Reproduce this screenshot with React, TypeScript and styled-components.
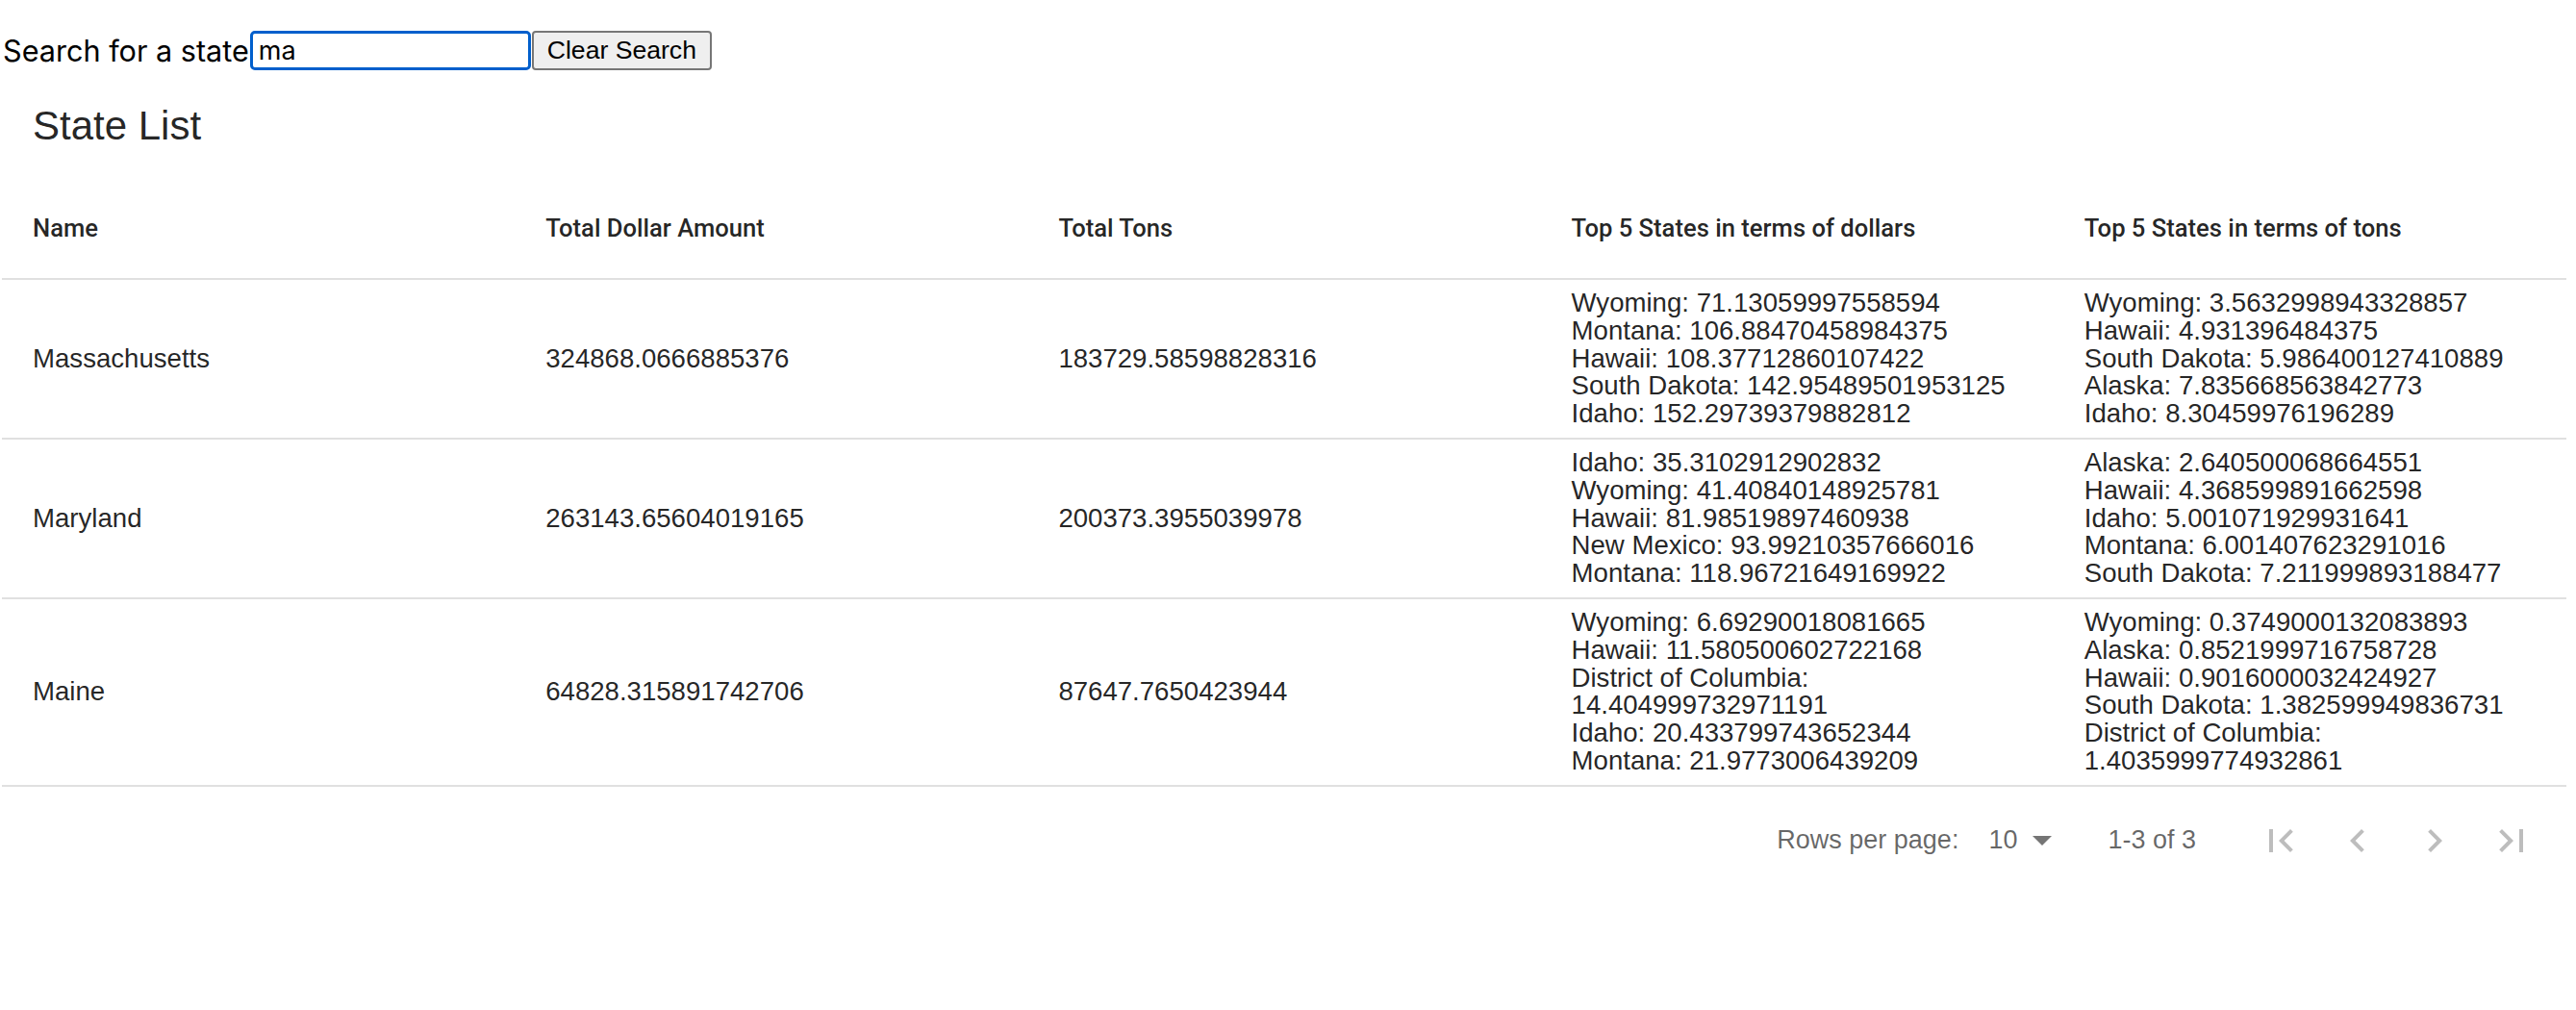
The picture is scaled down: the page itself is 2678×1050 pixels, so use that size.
import React from "react";
import styled, { createGlobalStyle } from "styled-components";

const GlobalStyle = createGlobalStyle`
  html, body { margin: 0; padding: 0; background: #ffffff; }
  body { font-family: Inter, "Liberation Sans", sans-serif; color: #000; }
`;

const Page = styled.div`
  width: 2678px;
  display: flex;
  flex-direction: column;
`;

const SearchRow = styled.div`
  display: flex;
  align-items: center;
  height: 41px;
  margin-top: 32px;
`;

const SearchLabel = styled.label`
  font-family: Inter, "Liberation Sans", sans-serif;
  font-size: 30.6px;
  color: #000;
  padding-left: 3px;
  white-space: nowrap;
`;

const SearchInput = styled.input`
  box-sizing: border-box;
  width: 292px;
  height: 41px;
  margin: 0 0 0 1px;
  padding: 0 6px;
  border: 3px solid #005fcc;
  border-radius: 5px;
  outline: none;
  font-family: Inter, "Liberation Sans", sans-serif;
  font-size: 27px;
  color: #000;
  caret-color: #000;
`;

const ClearButton = styled.button`
  box-sizing: border-box;
  height: 41px;
  width: 187px;
  margin-left: 1px;
  padding: 0;
  background: #efefef;
  border: 2px solid #767676;
  border-radius: 4px;
  font-family: "Liberation Sans", Arial, sans-serif;
  font-size: 26.6px;
  color: #000;
`;

const TableWrap = styled.div`
  margin-left: 2px;
  width: 2666px;
  display: flex;
  flex-direction: column;
  font-family: "Liberation Sans", Arial, sans-serif;
  color: rgba(0, 0, 0, 0.87);
`;

const Toolbar = styled.div`
  height: 116px;
  display: flex;
  align-items: center;
  padding-left: 32px;
`;

const Title = styled.h2`
  margin: 0;
  font-family: "Liberation Sans", Arial, sans-serif;
  font-size: 42px;
  font-weight: 400;
  color: rgba(0, 0, 0, 0.87);
`;

const Table = styled.table`
  width: 100%;
  table-layout: fixed;
  border-collapse: collapse;
`;

const HeadCell = styled.th`
  text-align: left;
  padding: 24px 32px 28px 32px;
  line-height: 48px;
  font-family: Roboto, "Liberation Sans", sans-serif;
  font-size: 25.6px;
  font-weight: 500;
  color: rgba(0, 0, 0, 0.87);
  border-bottom: 2px solid #e0e0e0;
  vertical-align: middle;
`;

const Cell = styled.td`
  padding: 10px 32px;
  font-size: 27.6px;
  line-height: 28.8px;
  color: rgba(0, 0, 0, 0.87);
  border-bottom: 2px solid #e0e0e0;
  vertical-align: middle;
`;

const Entry = styled.div`
  display: block;
`;

const Pagination = styled.div`
  height: 108px;
  padding-top: 2px;
  display: flex;
  align-items: center;
  justify-content: flex-end;
  padding-right: 17px;
  font-family: "Liberation Sans", Arial, sans-serif;
  font-size: 27px;
  color: rgba(0, 0, 0, 0.6);
`;

const RowsLabel = styled.span`
  white-space: nowrap;
`;

const RowsSelect = styled.div`
  display: flex;
  align-items: center;
  margin-left: 31px;
  color: rgba(0, 0, 0, 0.6);
`;

const DropArrow = styled.svg`
  width: 20px;
  height: 10px;
  margin-left: 16px;
  fill: rgba(0, 0, 0, 0.54);
`;

const Range = styled.span`
  margin-left: 58px;
  margin-right: 48px;
  white-space: nowrap;
`;

const Actions = styled.div`
  display: flex;
  align-items: center;
`;

const IconButton = styled.button`
  width: 80px;
  height: 80px;
  padding: 0;
  border: none;
  background: transparent;
  display: flex;
  align-items: center;
  justify-content: center;
  svg {
    width: 48px;
    height: 48px;
    fill: rgba(0, 0, 0, 0.26);
  }
`;

type Row = {
  name: string;
  dollars: string;
  tons: string;
  topDollars: string[];
  topTons: string[];
};

const rows: Row[] = [
  {
    name: "Massachusetts",
    dollars: "324868.0666885376",
    tons: "183729.58598828316",
    topDollars: [
      "Wyoming: 71.13059997558594",
      "Montana: 106.88470458984375",
      "Hawaii: 108.37712860107422",
      "South Dakota: 142.95489501953125",
      "Idaho: 152.29739379882812",
    ],
    topTons: [
      "Wyoming: 3.5632998943328857",
      "Hawaii: 4.931396484375",
      "South Dakota: 5.986400127410889",
      "Alaska: 7.835668563842773",
      "Idaho: 8.30459976196289",
    ],
  },
  {
    name: "Maryland",
    dollars: "263143.65604019165",
    tons: "200373.3955039978",
    topDollars: [
      "Idaho: 35.3102912902832",
      "Wyoming: 41.40840148925781",
      "Hawaii: 81.98519897460938",
      "New Mexico: 93.99210357666016",
      "Montana: 118.96721649169922",
    ],
    topTons: [
      "Alaska: 2.640500068664551",
      "Hawaii: 4.368599891662598",
      "Idaho: 5.001071929931641",
      "Montana: 6.001407623291016",
      "South Dakota: 7.211999893188477",
    ],
  },
  {
    name: "Maine",
    dollars: "64828.315891742706",
    tons: "87647.7650423944",
    topDollars: [
      "Wyoming: 6.69290018081665",
      "Hawaii: 11.580500602722168",
      "District of Columbia: 14.404999732971191",
      "Idaho: 20.433799743652344",
      "Montana: 21.9773006439209",
    ],
    topTons: [
      "Wyoming: 0.3749000132083893",
      "Alaska: 0.8521999716758728",
      "Hawaii: 0.9016000032424927",
      "South Dakota: 1.382599949836731",
      "District of Columbia: 1.4035999774932861",
    ],
  },
];

const headers = [
  "Name",
  "Total Dollar Amount",
  "Total Tons",
  "Top 5 States in terms of dollars",
  "Top 5 States in terms of tons",
];

export default function App() {
  return (
    <Page>
      <GlobalStyle />
      <SearchRow>
        <SearchLabel htmlFor="search">Search for a state</SearchLabel>
        <SearchInput id="search" value="ma" readOnly autoFocus />
        <ClearButton type="button">Clear Search</ClearButton>
      </SearchRow>
      <TableWrap>
        <Toolbar>
          <Title>State List</Title>
        </Toolbar>
        <Table>
          <thead>
            <tr>
              {headers.map((h) => (
                <HeadCell key={h}>{h}</HeadCell>
              ))}
            </tr>
          </thead>
          <tbody>
            {rows.map((r) => (
              <tr key={r.name}>
                <Cell>{r.name}</Cell>
                <Cell>{r.dollars}</Cell>
                <Cell>{r.tons}</Cell>
                <Cell>
                  {r.topDollars.map((t) => (
                    <Entry key={t}>{t}</Entry>
                  ))}
                </Cell>
                <Cell>
                  {r.topTons.map((t) => (
                    <Entry key={t}>{t}</Entry>
                  ))}
                </Cell>
              </tr>
            ))}
          </tbody>
        </Table>
        <Pagination>
          <RowsLabel>Rows per page:</RowsLabel>
          <RowsSelect>
            <span>10</span>
            <DropArrow viewBox="7 10 10 5">
              <path d="M7 10l5 5 5-5z" />
            </DropArrow>
          </RowsSelect>
          <Range>1-3 of 3</Range>
          <Actions>
            <IconButton type="button" aria-label="first page">
              <svg viewBox="0 0 24 24">
                <path d="M18.41 16.59 13.82 12l4.59-4.59L17 6l-6 6 6 6zM6 6h2v12H6z" />
              </svg>
            </IconButton>
            <IconButton type="button" aria-label="previous page">
              <svg viewBox="0 0 24 24">
                <path d="M15.41 16.59 10.83 12l4.58-4.59L14 6l-6 6 6 6z" />
              </svg>
            </IconButton>
            <IconButton type="button" aria-label="next page">
              <svg viewBox="0 0 24 24">
                <path d="M8.59 16.59 13.17 12 8.59 7.41 10 6l6 6-6 6z" />
              </svg>
            </IconButton>
            <IconButton type="button" aria-label="last page">
              <svg viewBox="0 0 24 24">
                <path d="M5.59 7.41 10.18 12l-4.59 4.59L7 18l6-6-6-6zM16 6h2v12h-2z" />
              </svg>
            </IconButton>
          </Actions>
        </Pagination>
      </TableWrap>
    </Page>
  );
}
